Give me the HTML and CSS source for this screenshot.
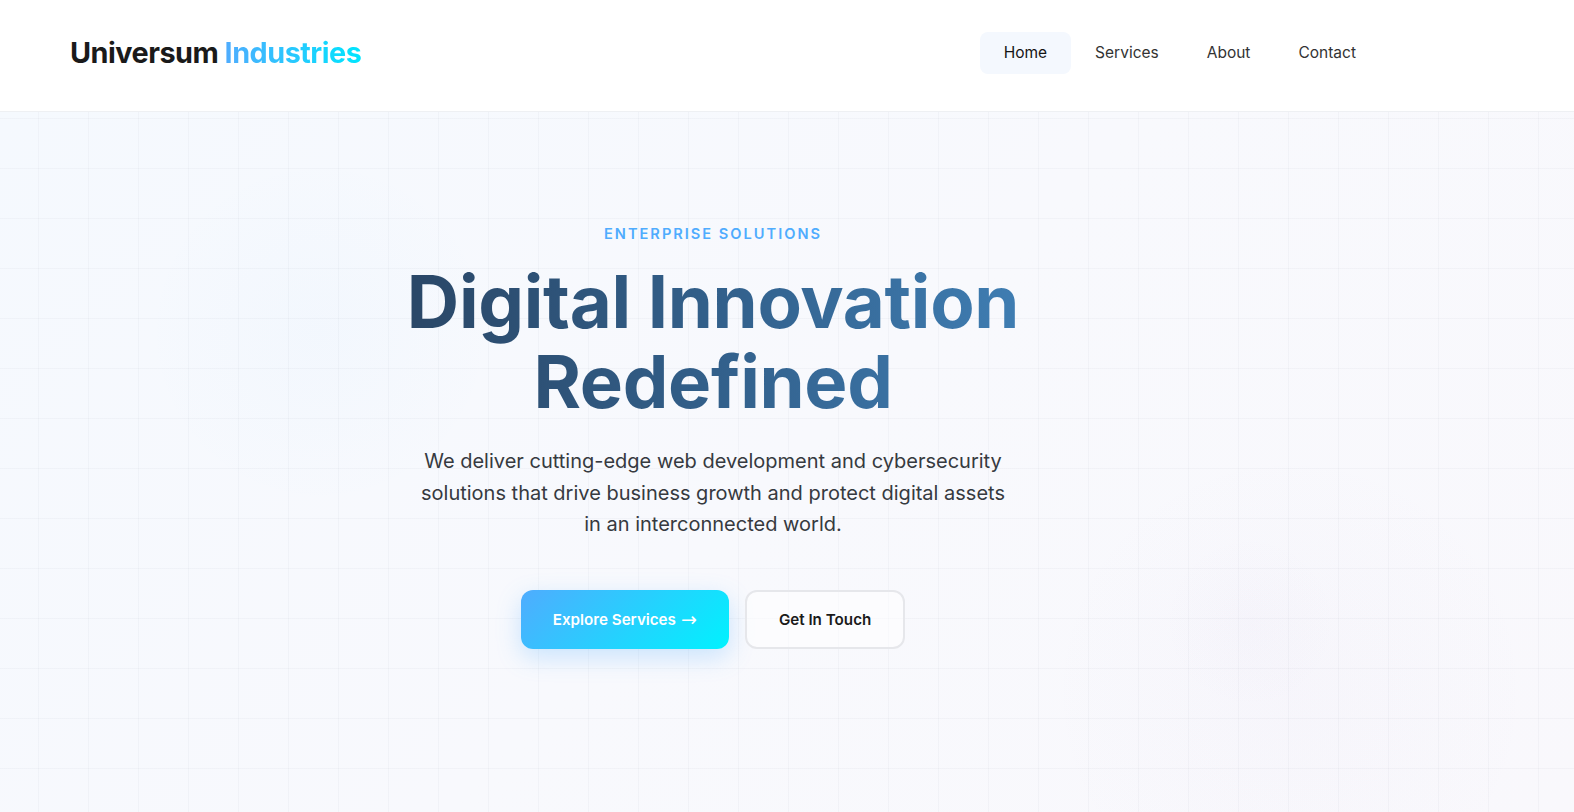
FILE: index.html
```html
<!DOCTYPE html>
<html lang="en">
<head>
<meta charset="utf-8">
<title>Universum Industries</title>
<link rel="stylesheet" href="styles.css">
</head>
<body>
<header class="site-header">
  <a class="logo" href="#">Universum <span class="logo-accent">Industries</span></a>
  <nav class="nav">
    <a class="nav-link active" href="#">Home</a>
    <a class="nav-link" href="#">Services</a>
    <a class="nav-link" href="#">About</a>
    <a class="nav-link" href="#">Contact</a>
  </nav>
</header>
<main class="hero">
  <div class="blob blob-a"></div>
  <div class="blob blob-b"></div>
  <div class="blob blob-c"></div>
  <div class="hero-inner">
    <p class="eyebrow">ENTERPRISE SOLUTIONS</p>
    <h1 class="headline"><span class="headline-text">Digital Innovation<br>Redefined</span></h1>
    <p class="lead">We deliver cutting-edge web development and cybersecurity solutions that drive business growth and protect digital assets in an interconnected world.</p>
    <div class="actions">
      <a class="btn btn-primary" href="#">Explore Services <span class="arrow">→</span></a>
      <a class="btn btn-secondary" href="#">Get In Touch</a>
    </div>
  </div>
</main>
</body>
</html>
```
FILE: styles.css
```css
* { box-sizing: border-box; }
html, body { margin: 0; padding: 0; }
body {
  font-family: Inter, "Noto Sans", "Liberation Sans", sans-serif;
  color: #1a1a1a;
  background: #ffffff;
  height: 812px;
  overflow: hidden;
}
a { text-decoration: none; color: inherit; }

.site-header {
  display: flex;
  align-items: center;
  justify-content: space-between;
  height: 112px;
  padding: 0 194px 6px 70px;
  background: #ffffff;
  border-bottom: 1px solid #eef0f3;
}
.logo {
  font-size: 28.8px;
  font-weight: 700;
  color: #1a1a1a;
  letter-spacing: -0.5px;
}
.logo-accent {
  background: linear-gradient(90deg, #4facfe, #00e5fe);
  -webkit-background-clip: text;
  background-clip: text;
  color: transparent;
}
.nav { display: flex; align-items: center; }
.nav-link {
  display: block;
  padding: 11px 24px;
  font-size: 15.5px;
  line-height: 20px;
  color: #333333;
  border-radius: 8px;
}
.nav-link.active {
  background: #f4f8fe;
  color: #141414;
}

.hero {
  position: relative;
  height: 700px;
  overflow: hidden;
  background-color: #f7f9fd;
  background-image:
    linear-gradient(to right, rgba(120, 130, 150, 0.05) 1px, transparent 1px),
    linear-gradient(to bottom, rgba(120, 130, 150, 0.05) 1px, transparent 1px),
    linear-gradient(135deg, #f5f9fe 0%, #f8f9fd 50%, #f9f8fc 100%);
  background-size: 50px 50px, 50px 50px, 100% 100%;
  background-position: 38px 6px, 38px 6px, 0 0;
}
.blob {
  position: absolute;
  border-radius: 50%;
  pointer-events: none;
}
.blob-a {
  left: 140px; top: 40px; width: 360px; height: 360px;
  background: radial-gradient(circle, rgba(79, 172, 254, 0.025) 0%, rgba(79, 172, 254, 0) 70%);
}
.blob-b {
  left: 1040px; top: 330px; width: 500px; height: 500px;
  background: radial-gradient(circle, rgba(150, 120, 200, 0.025) 0%, rgba(150, 120, 200, 0) 70%);
}
.blob-c {
  left: 1160px; top: 420px; width: 180px; height: 180px;
  background: radial-gradient(circle, rgba(150, 120, 200, 0.02) 0%, rgba(150, 120, 200, 0) 70%);
}

.hero-inner {
  position: relative;
  width: 1280px;
  margin-left: 73px;
  padding-top: 113px;
  display: flex;
  flex-direction: column;
  align-items: center;
  text-align: center;
}
.eyebrow {
  margin: 0 0 19px;
  font-size: 14.6px;
  line-height: 18px;
  font-weight: 600;
  letter-spacing: 2px;
  color: #4facfe;
}
.headline {
  margin: 0;
  font-size: 72.5px;
  line-height: 80px;
  font-weight: 700;
  letter-spacing: -0.3px;
}
.headline-text {
  display: inline-block;
  background: linear-gradient(90deg, #2a4767 0%, #33628e 55%, #3f7db2 100%);
  -webkit-background-clip: text;
  background-clip: text;
  color: transparent;
}
.lead {
  margin: 24px 0 0;
  max-width: 600px;
  font-size: 20px;
  line-height: 31.6px;
  color: #363a40;
}
.actions {
  display: flex;
  gap: 16px;
  margin-top: 49px;
}
.btn {
  display: inline-flex;
  align-items: center;
  justify-content: center;
  height: 59px;
  padding: 0 32px;
  font-size: 15.2px;
  font-weight: 600;
  border-radius: 12px;
}
.btn-primary {
  color: #ffffff;
  background: linear-gradient(135deg, #4facfe 0%, #00f2fe 100%);
  box-shadow: 0 8px 24px rgba(79, 172, 254, 0.28);
}
.arrow {
  margin-left: 5px;
  font-family: "DejaVu Sans", sans-serif;
  font-weight: 400;
  font-size: 19px;
  line-height: 1;
}
.btn-secondary {
  color: #1a1a1a;
  border: 2px solid #e6e7eb;
  background: rgba(255, 255, 255, 0.5);
}
```
